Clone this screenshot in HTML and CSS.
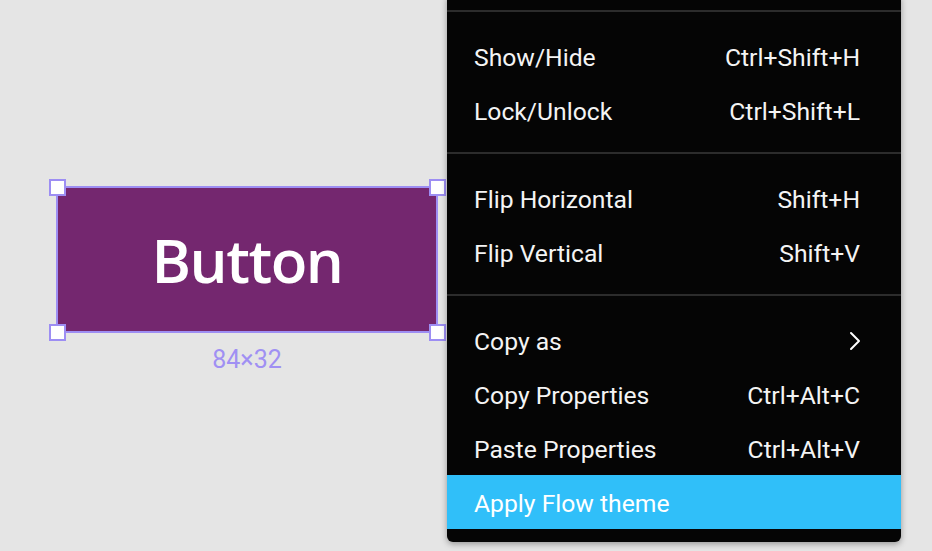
FILE: index.html
```html
<!DOCTYPE html>
<html>
<head>
<meta charset="utf-8">
<link rel="stylesheet" href="styles.css">
</head>
<body>
<div class="canvas">
  <div class="frame">
    <div class="btn">Button</div>
    <span class="handle h-tl"></span>
    <span class="handle h-tr"></span>
    <span class="handle h-bl"></span>
    <span class="handle h-br"></span>
    <div class="size">84×32</div>
  </div>

  <div class="menu">
    <div class="group">
      <div class="item"><span>Show/Hide</span><span class="key">Ctrl+Shift+H</span></div>
      <div class="item"><span>Lock/Unlock</span><span class="key">Ctrl+Shift+L</span></div>
    </div>
    <div class="group">
      <div class="item"><span>Flip Horizontal</span><span class="key">Shift+H</span></div>
      <div class="item"><span>Flip Vertical</span><span class="key">Shift+V</span></div>
    </div>
    <div class="group last">
      <div class="item"><span>Copy as</span><svg class="chev" width="12" height="20" viewBox="0 0 12 20"><polyline points="2,2 10,10 2,18" fill="none" stroke="#fff" stroke-width="2" stroke-linecap="round" stroke-linejoin="round"/></svg></div>
      <div class="item"><span>Copy Properties</span><span class="key">Ctrl+Alt+C</span></div>
      <div class="item"><span>Paste Properties</span><span class="key">Ctrl+Alt+V</span></div>
      <div class="item active"><span>Apply Flow theme</span></div>
    </div>
  </div>
</div>
</body>
</html>
```

FILE: styles.css
```css
html, body {
  margin: 0;
  padding: 0;
  width: 932px;
  height: 551px;
  overflow: hidden;
  background: #e5e5e5;
  font-family: Roboto, "Liberation Sans", sans-serif;
}

.canvas {
  position: relative;
  width: 932px;
  height: 551px;
}

.frame {
  position: absolute;
  left: 56px;
  top: 186px;
  width: 382px;
  height: 147px;
  box-sizing: border-box;
  border: 2px solid #9d8ef3;
  background: #74276f;
}

.btn {
  height: 100%;
  display: flex;
  align-items: center;
  justify-content: center;
  color: #ffffff;
  font-family: "Open Sans", "Noto Sans", sans-serif;
  font-weight: 600;
  font-size: 60px;
  letter-spacing: -1.5px;
}

.handle {
  position: absolute;
  width: 17px;
  height: 17px;
  box-sizing: border-box;
  background: #ffffff;
  border: 2.5px solid #9d8ef3;
}
.h-tl { left: -9.5px; top: -9.5px; }
.h-tr { right: -9.5px; top: -9.5px; }
.h-bl { left: -9.5px; bottom: -9.5px; }
.h-br { right: -9.5px; bottom: -9.5px; }

.size {
  position: absolute;
  left: 0;
  right: 0;
  top: 100%;
  margin-top: 14px;
  text-align: center;
  color: #a090f3;
  font-size: 25px;
  line-height: 30px;
}

.menu {
  position: absolute;
  left: 447px;
  top: -6px;
  width: 454px;
  padding-top: 16px;
  background: #050505;
  border-radius: 6px;
  box-shadow: 0 2px 6px rgba(0, 0, 0, 0.35);
  color: #f4f4f4;
  font-size: 24.7px;
}

.group {
  border-top: 2px solid #2c2c2c;
  padding: 17px 0 15px;
}
.group.last {
  padding-bottom: 13px;
}

.item {
  height: 54px;
  box-sizing: border-box;
  padding: 2px 41px 0 27px;
  display: flex;
  align-items: center;
  justify-content: space-between;
}

.item.active {
  background: #30bff9;
  color: #ffffff;
}

.chev {
  display: block;
  margin-right: -1px;
}
```
